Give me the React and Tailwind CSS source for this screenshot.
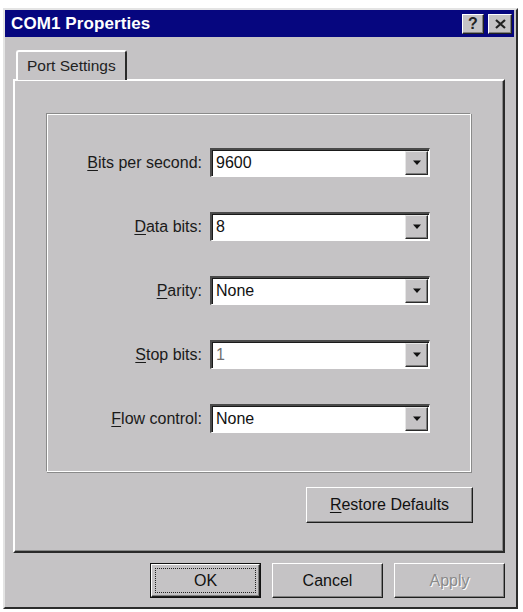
import React from "react";

const rows = [
  { u: "B", rest: "its per second:", value: "9600" },
  { u: "D", rest: "ata bits:", value: "8" },
  { u: "P", rest: "arity:", value: "None" },
  { u: "S", rest: "top bits:", value: "1", dim: true },
  { u: "F", rest: "low control:", value: "None" },
];

function Combo({ value, dim }) {
  return (
    <div className="flex h-[29px] w-[220px] border-t-2 border-l-2 border-t-[#4a4a4a] border-l-[#4a4a4a] border-r border-b border-r-white border-b-white bg-white shadow-[inset_1px_1px_0_#1a1a1a]">
      <div className={"flex flex-1 items-center pl-[4px] text-[16px] " + (dim ? "text-[#707070]" : "text-[#111]")}>
        {value}
      </div>
      <div className="m-[1px] flex w-[23px] items-center justify-center border border-t-[#e6e6e6] border-l-[#e6e6e6] border-r-[#2a2a2a] border-b-[#2a2a2a] bg-[#c5c3c5] shadow-[inset_-1px_-1px_0_#7d7d7d]">
        <svg width="10" height="6" viewBox="0 0 10 6">
          <path d="M1 0.5h8L5 5z" fill="#111" />
        </svg>
      </div>
    </div>
  );
}

function Button({ children, className = "", def, disabled }) {
  const inner = (
    <div className="flex h-full w-full items-center justify-center border border-t-white border-l-white border-r-[#1e1e1e] border-b-[#1e1e1e] shadow-[inset_-1px_-1px_0_#808080] text-[16px]">
      {def ? (
        <div className="flex h-[25px] w-[101px] items-center justify-center border border-dotted border-[#222]">
          {children}
        </div>
      ) : (
        children
      )}
    </div>
  );
  return (
    <div
      className={
        "h-[35px] w-[111px] " +
        (def ? "border border-[#111] " : "") +
        (disabled ? "text-[#8a8a8a] [text-shadow:1px_1px_0_#fff] " : "text-[#111] ") +
        className
      }
    >
      {inner}
    </div>
  );
}

export default function App() {
  return (
    <div className="h-[612px] w-[523px] bg-white pl-[3px] pt-[8px] font-['Liberation_Sans',Arial,sans-serif]">
      <div className="flex h-[601px] w-[515px] flex-col border-2 border-t-[#e4e4e4] border-l-[#e4e4e4] border-r-[#2c2c2c] border-b-[#2c2c2c] bg-[#c5c3c5]">
        {/* title bar */}
        <div className="flex h-[27px] w-[509px] items-center justify-between bg-[#06067f] pl-[6px] pr-[2px]">
          <span className="text-[17px] font-bold tracking-[0.1px] text-white">COM1 Properties</span>
          <div className="flex gap-[4px]">
            <div className="flex h-[20px] w-[22px] items-center justify-center border border-t-white border-l-white border-r-[#222] border-b-[#222] bg-[#c5c3c5] shadow-[inset_-1px_-1px_0_#808080] text-[16px] font-bold leading-none text-[#222]">
              ?
            </div>
            <div className="flex h-[20px] w-[24px] items-center justify-center border border-t-white border-l-white border-r-[#222] border-b-[#222] bg-[#c5c3c5] shadow-[inset_-1px_-1px_0_#808080]">
              <svg width="11" height="10" viewBox="0 0 11 10">
                <path d="M1 1l9 8M10 1L1 9" stroke="#222" strokeWidth="2.2" />
              </svg>
            </div>
          </div>
        </div>

        {/* content */}
        <div className="flex flex-1 flex-col pl-[8px] pt-[13px]">
          {/* tab */}
          <div className="relative z-10 -mb-[1px] ml-[3px] flex h-[30px] w-[111px] items-center rounded-t-[3px] border-t-2 border-l-2 border-r-2 border-t-white border-l-white border-r-[#2a2a2a] bg-[#c5c3c5] pl-[9px] text-[15.5px] text-[#222]">
            Port Settings
          </div>
          {/* panel */}
          <div className="flex h-[474px] w-[492px] flex-col border-2 border-t-white border-l-white border-r-[#2a2a2a] border-b-[#2a2a2a] shadow-[inset_-1px_-1px_0_#8a8a8a] pl-[31px] pt-[32px]">
            <div className="flex h-[359px] w-[425px] flex-col gap-[35px] border border-t-[#8a8a8a] border-l-[#8a8a8a] border-r-white border-b-white shadow-[inset_1px_1px_0_#fff,1px_1px_0_#8a8a8a] pt-[34px]">
              {rows.map((r) => (
                <div key={r.u} className="flex h-[29px] items-center">
                  <div className="w-[155px] text-right text-[16px] text-[#1a1a1a]">
                    <span className="underline underline-offset-2">{r.u}</span>
                    {r.rest}
                  </div>
                  <div className="ml-[8px]">
                    <Combo value={r.value} dim={r.dim} />
                  </div>
                </div>
              ))}
            </div>
            <div className="mt-[15px] flex w-[427px] justify-end">
              <Button className="!w-[167px] !h-[36px]">
                <span>
                  <span className="underline underline-offset-2">R</span>estore Defaults
                </span>
              </Button>
            </div>
          </div>
          {/* buttons */}
          <div className="mt-[10px] flex w-[492px] justify-end gap-[11px]">
            <Button def>OK</Button>
            <Button>Cancel</Button>
            <Button disabled>Apply</Button>
          </div>
        </div>
      </div>
    </div>
  );
}
